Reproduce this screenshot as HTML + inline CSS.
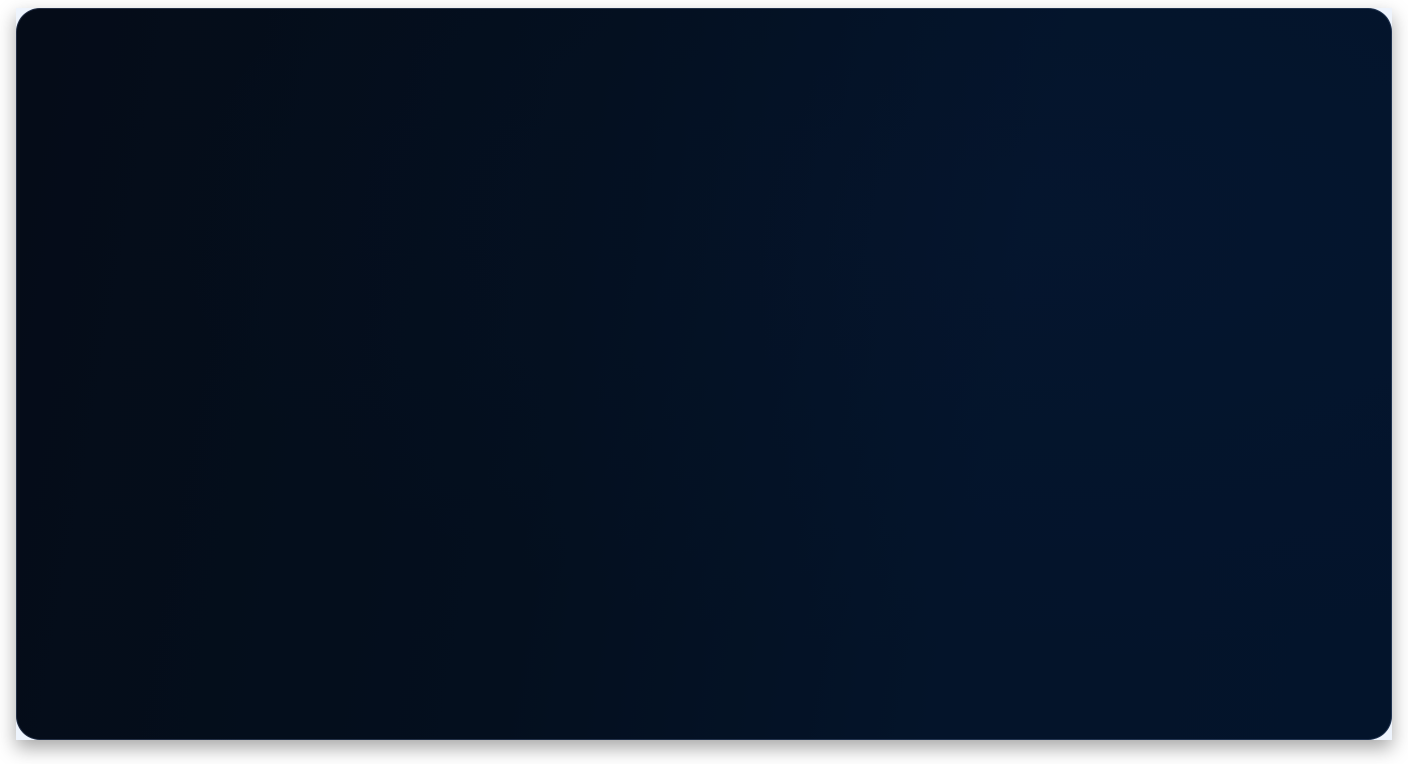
<!DOCTYPE html>
<html><head><meta charset="utf-8"><style>
html,body{margin:0;padding:0;background:#fff;width:1408px;height:764px;overflow:hidden}
.back{position:absolute;left:16px;top:8px;width:1376px;height:732px;background:#eef4fd;box-shadow:0 8px 18px rgba(0,0,0,0.35)}
.card{position:absolute;left:16px;top:8px;width:1376px;height:732px;border-radius:24px;
background:linear-gradient(100deg,#050c18 0%,#040f1e 40%,#04142a 70%,#03142b 100%);
box-shadow:inset 0 0 0 1px rgba(90,110,150,0.35)}
.glow{position:absolute;left:16px;top:8px;width:1376px;height:732px;border-radius:24px;
background:radial-gradient(ellipse at 75% 30%,rgba(10,30,70,0.15),transparent 60%)}
</style></head><body>
<div class="back"></div>
<div class="card"></div>
<div class="glow"></div>
</body></html>
